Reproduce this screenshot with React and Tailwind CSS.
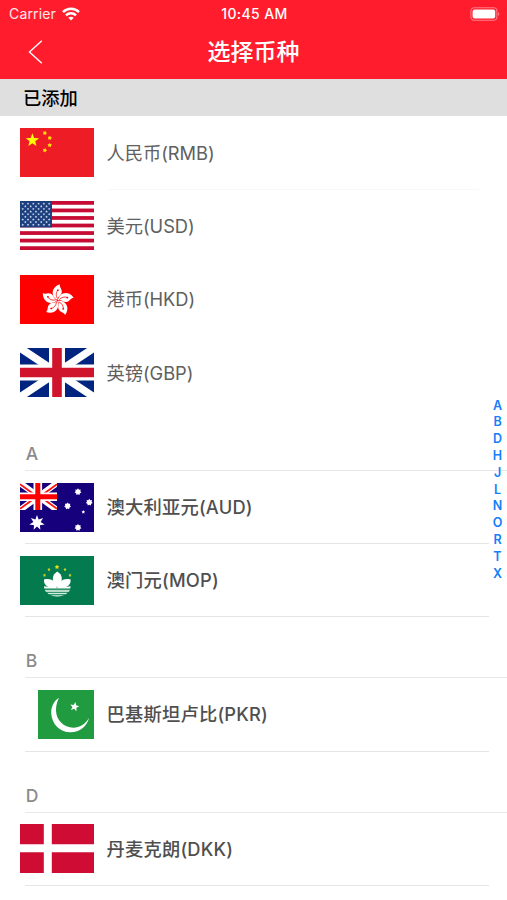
import React from "react";

const starPoints = (cx, cy, r, n = 5, inner = 0.4, rot = 0) =>
  Array.from({ length: n * 2 }, (_, i) => {
    const a = -Math.PI / 2 + rot + (i * Math.PI) / n;
    const d = i % 2 ? r * inner : r;
    return `${(cx + d * Math.cos(a)).toFixed(2)},${(cy + d * Math.sin(a)).toFixed(2)}`;
  }).join(" ");

const Star = ({ x, y, r, n, inner, rot, fill = "#fff" }) => (
  <polygon points={starPoints(x, y, r, n, inner, rot)} fill={fill} />
);

function China() {
  return (
    <>
      <rect width="74" height="49" fill="#ee1c25" />
      <Star x={12.4} y={12.3} r={7} inner={0.42} fill="#ffff00" />
      <Star x={24.8} y={5} r={2.3} rot={0.4} inner={0.6} fill="#ffde00" />
      <Star x={29.7} y={10} r={2.3} rot={0.2} inner={0.6} fill="#ffde00" />
      <Star x={29.7} y={17.2} r={2.3} inner={0.6} fill="#ffde00" />
      <Star x={24.8} y={22.3} r={2.3} rot={0.4} inner={0.6} fill="#ffde00" />
    </>
  );
}

function Usa() {
  const stars = [];
  for (let r = 0; r < 9; r++) {
    for (let c = 0; c < (r % 2 ? 5 : 6); c++) {
      stars.push(<Star key={`${r}-${c}`} x={2.7 + c * 5.3 + (r % 2 ? 2.65 : 0)} y={2.7 + r * 2.63} r={1.3} inner={0.5} fill="#d5dceb" />);
    }
  }
  return (
    <>
      <rect width="74" height="49" fill="#fff" />
      {[0, 1, 2, 3, 4, 5, 6].map((i) => (
        <rect key={i} y={i * 7.54} width="74" height="3.77" fill="#c60c35" />
      ))}
      <rect width="32" height="26.4" fill="#1c3f80" />
      {stars}
    </>
  );
}

function HongKong() {
  return (
    <>
      <rect width="74" height="49" fill="#ff0000" />
      {[0, 72, 144, 216, 288].map((a) => (
        <g key={a} transform={`translate(37.5 25.4) rotate(${a})`}>
          <path d="M0 -0.5C-7 -4 -6.6 -13.4 2.4 -16.2C1.6 -13 4.9 -11.6 4.2 -7.8C3.6 -4.6 .2 -4.2 0 -.5Z" fill="#fff" />
          <path d="M-.2 -2C-2 -5 -1.4 -7.8 .2 -10.4" fill="none" stroke="#ff0000" strokeWidth=".7" />
          <circle cx=".4" cy="-10.2" r=".9" fill="#ff0000" />
        </g>
      ))}
    </>
  );
}

function Britain() {
  return (
    <>
      <rect width="74" height="49" fill="#012480" />
      <path d="M0 0L74 49M74 0L0 49" stroke="#fff" strokeWidth="7.6" />
      <path d="M37 0V49M0 24.5H74" stroke="#fff" strokeWidth="16" />
      <path d="M37 0V49M0 24.5H74" stroke="#d0142c" strokeWidth="9.6" />
    </>
  );
}

function Australia() {
  return (
    <>
      <rect width="74" height="49" fill="#16007c" />
      <svg width="37" height="27" viewBox="0 0 37 27">
        <path d="M0 0L37 27M37 0L0 27" stroke="#fff" strokeWidth="6" />
        <path d="M0 1.2L17 13.5M20 13.5L37 25.8M37 1.2L20 13.5M17 13.5L0 25.8" stroke="#ff1010" strokeWidth="1.9" />
        <path d="M17.8 0V27M0 13.8H37" stroke="#fff" strokeWidth="8.6" />
        <path d="M17.8 0V27M0 13.8H37" stroke="#ff0000" strokeWidth="5" />
      </svg>
      <Star x={17} y={39.8} r={7.8} n={7} inner={0.48} />
      <Star x={58} y={8.8} r={3.5} n={7} inner={0.68} />
      <Star x={47.6} y={23} r={3.5} n={7} inner={0.68} />
      <Star x={69.3} y={19.3} r={3.5} n={7} inner={0.68} />
      <Star x={63.3} y={29} r={2} inner={0.5} />
      <Star x={58} y={44.5} r={3.5} n={7} inner={0.68} />
    </>
  );
}

function Macau() {
  return (
    <>
      <rect width="74" height="49" fill="#037b4e" />
      <Star x={37} y={11} r={2.4} inner={0.55} fill="#e6dc18" />
      <Star x={29} y={13.5} r={1.7} inner={0.55} fill="#c9d321" />
      <Star x={45} y={13.5} r={1.7} inner={0.55} fill="#c9d321" />
      <Star x={24.5} y={19.3} r={1.7} inner={0.55} fill="#c9d321" />
      <Star x={50} y={19.3} r={1.7} inner={0.55} fill="#c9d321" />
      <path d="M37.3 15.5C42.8 19 42.6 24 40.2 28L37.3 32L34.5 28C32 24 31.8 19 37.3 15.5Z" fill="#fff" />
      <path d="M36.8 32C27 32.4 23.5 28.5 24 23.4C30 21.8 36 24 36.8 32Z" fill="#fff" />
      <path d="M37.8 32C47.6 32.4 51 28.5 50.6 23.4C44.6 21.8 38.6 24 37.8 32Z" fill="#fff" />
      <path d="M24 30.2C29 31.2 33 31 37.3 32C41.6 31 46 31.2 50.6 30.2L50.3 32.6H24.3Z" fill="#fff" />
      <path d="M24.8 33.8H49.9C49.6 34.7 49.2 35.4 48.7 36H26C25.4 35.4 25 34.7 24.8 33.8Z" fill="#b7ddca" />
      <path d="M27 36.8H47.7L45.8 38.3H28.9Z" fill="#d5ece1" />
      <path d="M30.4 39H44.2Q37.3 42.3 30.4 39Z" fill="#a5d2bd" />
    </>
  );
}

function Pakistan() {
  return (
    <>
      <rect width="18" height="49" fill="#fff" />
      <rect x="18" width="56" height="49" fill="#219b40" />
      <path d="M39 7.7C34 11 31 16.5 31.2 23C31.6 34 40 42.5 50.5 42.3C59.5 42.1 67 36.5 69 28C65 34.5 59.5 37.7 53.5 37.7C43.5 37.5 36.2 30 36 20.5C35.9 16 37 11.5 39 7.7Z" fill="#fff" />
      <Star x={54.5} y={16.8} r={4.8} rot={0.2} inner={0.44} />
    </>
  );
}

function Denmark() {
  return (
    <>
      <rect width="74" height="49" fill="#ce0c34" />
      <path d="M27.8 0V49M0 24.3H74" stroke="#fff" strokeWidth="8" />
    </>
  );
}

function Row({ flag: Flag, name, strong }) {
  return (
    <div className="flex h-full items-center gap-[12.5px] pl-5">
      <svg className="h-[49px] w-[74px] shrink-0" viewBox="0 0 74 49">
        <Flag />
      </svg>
      <span
        className={`text-[18.3px] leading-6 whitespace-nowrap ${
          strong ? "font-medium tracking-[0.2px] text-[#4f4f4f]" : "font-normal tracking-[-0.05px] text-[#606060]"
        }`}
      >
        {name}
      </span>
    </div>
  );
}

const added = [
  [China, "人民币(RMB)"],
  [Usa, "美元(USD)"],
  [HongKong, "港币(HKD)"],
  [Britain, "英镑(GBP)"],
];

const sections = [
  { letter: "A", rows: [[Australia, "澳大利亚元(AUD)"], [Macau, "澳门元(MOP)"]] },
  { letter: "B", rows: [[Pakistan, "巴基斯坦卢比(PKR)"]] },
  { letter: "D", rows: [[Denmark, "丹麦克朗(DKK)"]] },
];

export default function App() {
  return (
    <div className="relative flex h-[900px] w-[507px] flex-col overflow-hidden bg-white font-['Inter','Noto_Sans_CJK_SC',sans-serif]">
      <header className="h-[79px] shrink-0 bg-[#ff1d2d] text-white">
        <div className="grid h-[27px] grid-cols-3 items-center pr-[7px] pl-[9px] text-[13.5px] leading-none">
          <div className="flex items-center gap-[6px]">
            <span className="text-[14px] tracking-[0.15px] text-white/90">Carrier</span>
            <svg className="h-[14px] w-[18px]" viewBox="0 0 18 14" fill="none" stroke="#fff" strokeWidth="2.5">
              <path d="M1 5.2C5.5 .7 12.5 .7 17 5.2" />
              <path d="M4 8.3C6.8 5.5 11.2 5.5 14 8.3" />
              <path d="M9 13.6L6.3 10.8Q9 8.5 11.7 10.8Z" fill="#fff" stroke="none" />
            </svg>
          </div>
          <span className="pt-px text-center text-[14px] font-medium tracking-[0.4px]">10:45 AM</span>
          <svg className="h-[14px] w-[30px] justify-self-end" viewBox="0 0 30 14">
            <rect x=".9" y=".7" width="26" height="12.6" rx="3.5" fill="none" stroke="#ff7c87" strokeWidth="1.1" />
            <rect x="2.6" y="2.4" width="22.6" height="9.2" rx="2" fill="#fff" />
            <path d="M28.2 5Q30.4 7 28.2 9Z" fill="#ff8a93" />
          </svg>
        </div>
        <div className="grid h-[50px] grid-cols-[60px_1fr_60px] items-center">
          <svg className="ml-7 h-6 w-[15px]" viewBox="0 0 15 24" fill="none" stroke="#fff" strokeWidth="1.4">
            <path d="M13.8 .8L1.5 12L13.8 23.2" />
          </svg>
          <h1 className="text-center text-[23px] leading-none font-medium">选择币种</h1>
        </div>
      </header>

      <h2 className="flex h-[37px] shrink-0 items-center bg-[#dfdfdf] pt-[2px] pl-[23px] text-[18.3px] leading-none font-medium text-black">
        已添加
      </h2>

      <div className="shrink-0">
        {added.map(([flag, name], i) => (
          <div key={name} className="h-[73.33px]">
            <Row flag={flag} name={name} />
            {i === 0 && <div className="mr-7 ml-[107px] h-px bg-[#f8f8f8]" />}
          </div>
        ))}
      </div>

      <div className="shrink-0 pt-[17.7px]">
        {sections.map(({ letter, rows }) => (
          <section key={letter}>
            <div className="h-[44px] border-b border-[#e8e8e8] ml-[25px] pt-[15px]">
              <h3 className="pl-[0.7px] text-[17.5px] leading-6 font-medium text-[#8b8b8b]">{letter}</h3>
            </div>
            {rows.map(([flag, name]) => (
              <div key={name} className="flex h-[73.2px] flex-col">
                <div className="min-h-0 flex-1">
                  <Row flag={flag} name={name} strong />
                </div>
                <div className="mr-[18px] ml-[25px] h-px shrink-0 bg-[#e6e6e6]" />
              </div>
            ))}
            <div className="h-[17px]" />
          </section>
        ))}
      </div>

      <nav className="absolute top-[397.6px] right-[2px] flex w-[15px] flex-col text-center text-[12.5px] leading-[16.8px] font-semibold text-[#147efb]">
        {"ABDHJLNORTX".split("").map((c) => (
          <span key={c}>{c}</span>
        ))}
      </nav>
    </div>
  );
}
